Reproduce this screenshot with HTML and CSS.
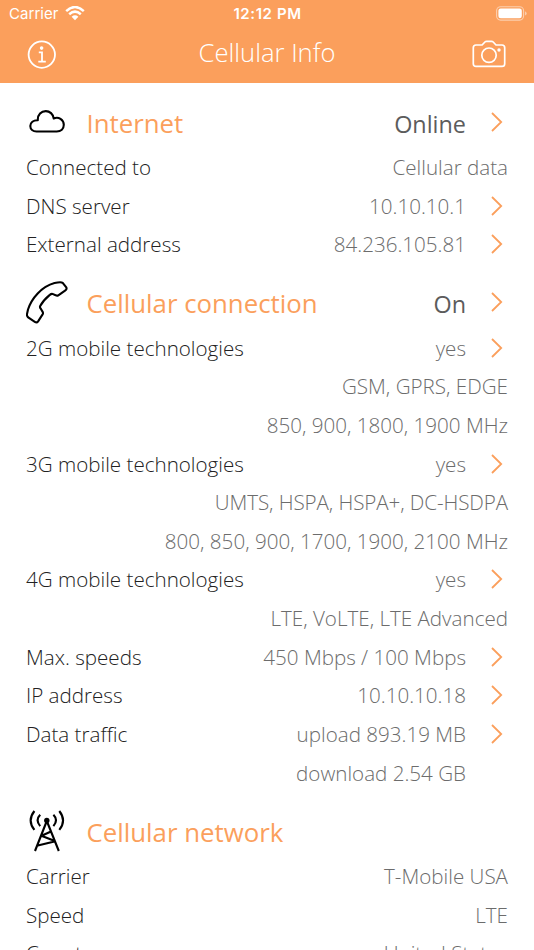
FILE: index.html
```html
<!DOCTYPE html>
<html lang="en">
<head>
<meta charset="utf-8">
<title>Cellular Info</title>
<link rel="stylesheet" href="styles.css">
</head>
<body>
<svg class="defs" aria-hidden="true"><symbol id="chevron" viewBox="0 0 12 20"><path d="M1 1l9.2 9L1 19"/></symbol></svg>
<header class="top">
  <div class="status">
    <div class="carrier"><span>Carrier</span>
      <svg class="wifi" width="20" height="15" viewBox="0 0 20 15"><path d="M1.200 5.100Q10-3 18.800 5.100M4.200 8.200Q10 3 15.800 8.200" fill="none" stroke="#fff" stroke-width="2.500"/><path d="M6.600 10.700Q10 7.800 13.400 10.700L10 14.200z" fill="#fff"/></svg>
    </div>
    <time>12:12 PM</time>
    <svg class="battery" width="31" height="15" viewBox="0 0 31 15"><rect x=".6" y=".7" width="27" height="13.400" rx="4" fill="none" stroke="#fff" stroke-opacity=".5" stroke-width="1.100"/><rect x="2.400" y="2.500" width="23.400" height="9.800" rx="2.300" fill="#fff"/><path d="M29.100 5.200q1.500.7 1.500 2.200t-1.500 2.200z" fill="#fff" fill-opacity=".55"/></svg>
  </div>
  <div class="nav">
    <svg width="30" height="30" viewBox="0 0 30 30" fill="none" stroke="#fff"><circle cx="14.800" cy="15.600" r="13.200" stroke-width="1.800"/><circle cx="14.600" cy="9.100" r="1.800" fill="#fff" stroke="none"/><path d="M11.800 13.400H15v9.200M11.300 22.700h7.500" stroke-width="1.800"/></svg>
    <h1>Cellular Info</h1>
    <svg width="34" height="28" viewBox="0 0 34 28" fill="none" stroke="#fff" stroke-width="1.700" stroke-linejoin="round"><path d="M4 5h6.100l2.800-3q.7-.7 1.700-.7h4.900q1 0 1.700.7l2.800 3H30q2.700 0 2.700 2.700v16q0 2.700-2.700 2.700H4q-2.700 0-2.700-2.700v-16Q1.300 5 4 5z"/><circle cx="17" cy="15.200" r="7.200"/><circle cx="27" cy="10" r="1.700" fill="#fff" stroke="none"/></svg>
  </div>
</header>
<main>
  <section>
    <div class="head">
      <svg class="icon" width="42" height="44" viewBox="0 0 42 44"><path d="M10.500 31.500h20.300c4 0 7-2.700 7-6.700 0-5.200-5.400-8.600-10.100-6.300C27.200 14 23.700 11.100 19.800 11.100c-4.700 0-8 3.500-8 8.400v.8c-4.500-.2-7.500 2.200-7.500 5.700 0 3.200 2.700 5.500 6.200 5.500z"/></svg>
      <h2>Internet</h2><span class="state">Online</span><svg class="chev"><use href="#chevron"/></svg>
    </div>
    <div class="row"><span>Connected to</span><span class="value">Cellular data</span></div>
    <div class="row link"><span>DNS server</span><span class="value">10.10.10.1</span><svg class="chev"><use href="#chevron"/></svg></div>
    <div class="row link"><span>External address</span><span class="value">84.236.105.81</span><svg class="chev"><use href="#chevron"/></svg></div>
  </section>
  <section>
    <div class="head">
      <svg class="icon" width="42" height="44" viewBox="0 0 42 44"><path d="M2 29.500C5.500 18.500 15.500 6.500 28.500 3q6.500-1.300 8.200-.2l3.600 4.600q.8 1.900-.9 3l-7.100 4.900q-1.300.8-2.700-.1l-3.100-1.300q-1.200-.3-2.700 1-6.500 5.300-9.600 11.200-.7 1.300.6 2.700l2 3.300q.5 1.100-.2 2.300l-4.500 7q-1.300 1.800-3.300.5L2.200 37.400q-1.600-1.600-1.200-3.400z"/></svg>
      <h2>Cellular connection</h2><span class="state">On</span><svg class="chev"><use href="#chevron"/></svg>
    </div>
    <div class="row link"><span>2G mobile technologies</span><span class="value">yes</span><svg class="chev"><use href="#chevron"/></svg></div>
    <div class="row"><span class="value">GSM, GPRS, EDGE</span></div>
    <div class="row"><span class="value">850, 900, 1800, 1900 MHz</span></div>
    <div class="row link"><span>3G mobile technologies</span><span class="value">yes</span><svg class="chev"><use href="#chevron"/></svg></div>
    <div class="row"><span class="value tight">UMTS, HSPA, HSPA+, DC-HSDPA</span></div>
    <div class="row"><span class="value">800, 850, 900, 1700, 1900, 2100 MHz</span></div>
    <div class="row link"><span>4G mobile technologies</span><span class="value">yes</span><svg class="chev"><use href="#chevron"/></svg></div>
    <div class="row"><span class="value">LTE, VoLTE, LTE Advanced</span></div>
    <div class="row link"><span>Max. speeds</span><span class="value">450 Mbps / 100 Mbps</span><svg class="chev"><use href="#chevron"/></svg></div>
    <div class="row link"><span>IP address</span><span class="value">10.10.10.18</span><svg class="chev"><use href="#chevron"/></svg></div>
    <div class="row link"><span>Data traffic</span><span class="value">upload 893.19 MB</span><svg class="chev"><use href="#chevron"/></svg></div>
    <div class="row indent"><span class="value">download 2.54 GB</span></div>
  </section>
  <section>
    <div class="head">
      <svg class="icon" width="42" height="44" viewBox="0 0 42 44"><circle cx="20.800" cy="12.500" r="2.700" class="dot"/><path d="M20.800 13L9 43M20.800 13l12 30M16.700 27.300L25 23.500M16 28l13.500 5.200M11.800 37.500l17.700-4.300M14.200 6.700q-5.200 5.300 0 11.400M27.400 6.700q5.200 5.300 0 11.400M8.400 3q-7.500 9.500 0 18.900M33.300 3q7.500 9.500 0 18.900"/></svg>
      <h2>Cellular network</h2>
    </div>
    <div class="row"><span>Carrier</span><span class="value">T-Mobile USA</span></div>
    <div class="row"><span>Speed</span><span class="value">LTE</span></div>
    <div class="row"><span>Country</span><span class="value">United States</span></div>
  </section>
</main>
</body>
</html>
```
FILE: styles.css
```css
* { box-sizing: border-box; }
body { margin: 0; height: 950px; overflow: hidden; background: #fff; color: #222; font-family: "Open Sans", sans-serif; font-weight: 300; }
svg { display: block; flex: none; }
.defs { display: none; }
h1, h2 { margin: 0; }
.top { height: 83px; background: #fb9f5c; color: #fff; }
.status { height: 28px; padding: 0 7px 0 9px; display: grid; grid-template-columns: 1fr auto 1fr; align-items: center; font: 400 15px/28px Inter, sans-serif; }
.carrier { display: flex; align-items: center; gap: 6px; letter-spacing: .05px; }
.wifi { margin-top: -2px; }
.status time { font-weight: 600; letter-spacing: .6px; margin-left: -1px; }
.battery { justify-self: end; margin-top: -1px; }
.nav { height: 52px; padding: 0 28px 0 27px; display: grid; grid-template-columns: 34px 1fr 34px; align-items: center; text-align: center; }
.nav h1 { font-size: 25.6px; font-weight: 300; line-height: 48px; padding: 0 0 2px 1px; }
main { padding: .25px 26px 0; }
.head { height: 64.5px; padding: 15px 5px 0 0; display: flex; align-items: center; }
.icon { fill: none; stroke: #000; stroke-width: 2.1; stroke-linejoin: round; margin-top: -3px; }
.icon .dot { fill: #000; stroke: none; }
.head h2 { margin-left: 18.5px; color: #fb9f5c; font-size: 25.8px; line-height: 40px; font-weight: 370; }
.state { margin-left: auto; font-size: 23.4px; font-weight: 370; line-height: 40px; color: #5c5c5c; padding-top: 1px; }
.chev { width: 12px; height: 20px; margin-left: 25px; fill: none; stroke: #fb9f5c; stroke-width: 1.8; }
.head .chev { margin-top: -3px; }
.row { height: 38.67px; display: flex; align-items: center; font-size: 20.6px; line-height: 38px; white-space: nowrap; }
.row.link { padding-right: 5px; }
.row.indent { padding-right: 42px; }
.value { margin-left: auto; color: #6c6c6c; }
.tight { letter-spacing: -.09px; }
```
